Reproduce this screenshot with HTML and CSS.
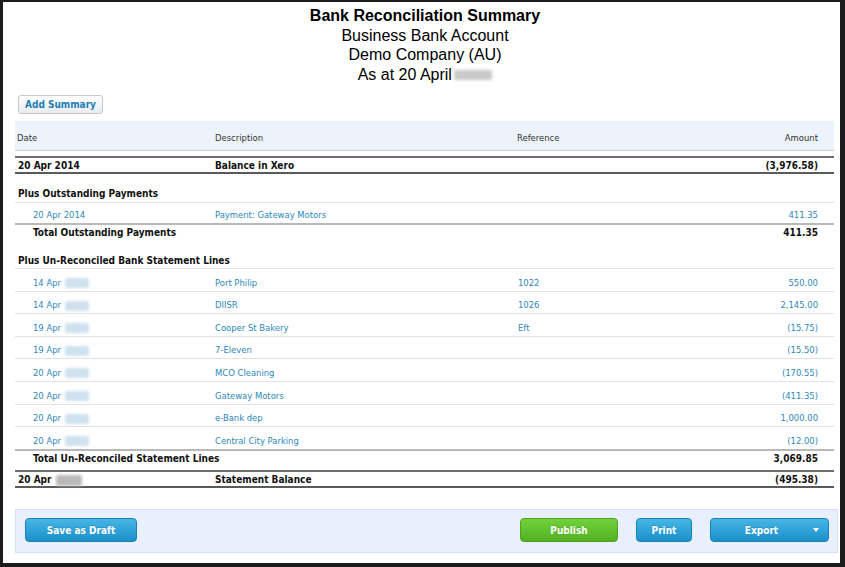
FILE: index.html
```html
<!DOCTYPE html>
<html lang="en">
<head>
<meta charset="utf-8">
<title>Bank Reconciliation Summary</title>
<link rel="stylesheet" href="styles.css">
</head>
<body>
<div class="frame">
  <header class="report-head">
    <h1 class="title">Bank Reconciliation Summary</h1>
    <div class="subtitle">Business Bank Account</div>
    <div class="subtitle">Demo Company (AU)</div>
    <div class="subtitle">As at 20 April <span class="blur blur-title"></span></div>
  </header>

  <div class="toolbar">
    <button class="btn-light">Add Summary</button>
  </div>

  <div class="report">
    <div class="row head-row">
      <span class="c-date">Date</span><span class="c-desc">Description</span><span class="c-ref">Reference</span><span class="c-amt">Amount</span>
    </div>

    <div class="row balance-row">
      <span class="c-date">20 Apr 2014</span><span class="c-desc">Balance in Xero</span><span class="c-ref"></span><span class="c-amt">(3,976.58)</span>
    </div>

    <div class="section section-first">
      <div class="row section-title">Plus Outstanding Payments</div>
      <div class="row item">
        <span class="c-date indent">20 Apr 2014</span><span class="c-desc">Payment: Gateway Motors</span><span class="c-ref"></span><span class="c-amt">411.35</span>
      </div>
      <div class="row total">
        <span class="c-label indent">Total Outstanding Payments</span><span class="c-amt">411.35</span>
      </div>
    </div>

    <div class="section">
      <div class="row section-title">Plus Un-Reconciled Bank Statement Lines</div>
      <div class="row item">
        <span class="c-date indent">14 Apr<i class="blur blur-blue"></i></span><span class="c-desc">Port Philip</span><span class="c-ref">1022</span><span class="c-amt">550.00</span>
      </div>
      <div class="row item">
        <span class="c-date indent">14 Apr<i class="blur blur-blue"></i></span><span class="c-desc">DIISR</span><span class="c-ref">1026</span><span class="c-amt">2,145.00</span>
      </div>
      <div class="row item">
        <span class="c-date indent">19 Apr<i class="blur blur-blue"></i></span><span class="c-desc">Cooper St Bakery</span><span class="c-ref">Eft</span><span class="c-amt">(15.75)</span>
      </div>
      <div class="row item">
        <span class="c-date indent">19 Apr<i class="blur blur-blue"></i></span><span class="c-desc">7-Eleven</span><span class="c-ref"></span><span class="c-amt">(15.50)</span>
      </div>
      <div class="row item">
        <span class="c-date indent">20 Apr<i class="blur blur-blue"></i></span><span class="c-desc">MCO Cleaning</span><span class="c-ref"></span><span class="c-amt">(170.55)</span>
      </div>
      <div class="row item">
        <span class="c-date indent">20 Apr<i class="blur blur-blue"></i></span><span class="c-desc">Gateway Motors</span><span class="c-ref"></span><span class="c-amt">(411.35)</span>
      </div>
      <div class="row item">
        <span class="c-date indent">20 Apr<i class="blur blur-blue"></i></span><span class="c-desc">e-Bank dep</span><span class="c-ref"></span><span class="c-amt">1,000.00</span>
      </div>
      <div class="row item">
        <span class="c-date indent">20 Apr<i class="blur blur-blue"></i></span><span class="c-desc">Central City Parking</span><span class="c-ref"></span><span class="c-amt">(12.00)</span>
      </div>
      <div class="row total">
        <span class="c-label indent">Total Un-Reconciled Statement Lines</span><span class="c-amt">3,069.85</span>
      </div>
    </div>

    <div class="row balance-row statement">
      <span class="c-date">20 Apr<i class="blur blur-grey"></i></span><span class="c-desc">Statement Balance</span><span class="c-ref"></span><span class="c-amt">(495.38)</span>
    </div>
  </div>

  <div class="actions">
    <button class="btn btn-blue btn-draft">Save as Draft</button>
    <div class="actions-right">
      <button class="btn btn-green btn-publish">Publish</button>
      <button class="btn btn-blue btn-print">Print</button>
      <button class="btn btn-blue btn-export"><span class="export-label">Export</span><span class="caret"></span></button>
    </div>
  </div>
</div>
</body>
</html>
```

FILE: styles.css
```css
* { box-sizing: border-box; }

html, body {
  margin: 0;
  padding: 0;
  background: #ffffff;
}

.frame {
  width: 845px;
  height: 567px;
  border-style: solid;
  border-color: #1c1c1c;
  border-width: 2px 5px 4px 3px;
  background: #ffffff;
  overflow: hidden;
  font-family: "DejaVu Sans Condensed", "DejaVu Sans", sans-serif;
  font-size: 9.4px;
  color: #222222;
}

/* ---------- heading ---------- */
.report-head {
  padding: 4px 0 0 7px;
  text-align: center;
  font-family: "Liberation Sans", Arial, sans-serif;
  font-size: 16px;
  line-height: 19.5px;
  color: #000000;
}

.title {
  margin: 0;
  font-size: 16px;
  font-weight: bold;
  line-height: 19.5px;
}

.blur {
  display: inline-block;
  vertical-align: middle;
  border-radius: 2px;
  filter: blur(1.5px);
}

.blur-title {
  width: 38px;
  height: 10px;
  margin-left: -2px;
  background: #c9c9c9;
}

/* ---------- toolbar ---------- */
.toolbar {
  padding: 11px 0 0 15px;
}

.btn-light {
  display: block;
  width: 85px;
  height: 19px;
  padding: 0;
  border: 1px solid #c6c9cc;
  border-radius: 3px;
  background: linear-gradient(#ffffff, #e9ebed);
  font-family: "DejaVu Sans Condensed", "DejaVu Sans", sans-serif;
  font-size: 10px;
  font-weight: bold;
  color: #1f7fb6;
}

/* ---------- report table ---------- */
.report {
  margin: 7px 6px 0 12px;
}

.row {
  display: flex;
  padding: 0 16px 0 3px;
  line-height: 14px;
  white-space: nowrap;
}

.c-date { flex: 0 0 197px; }
.c-desc { flex: 0 0 303px; }
.c-ref { flex: 1 1 auto; }
.c-label { flex: 1 1 auto; }
.c-amt { flex: 0 0 140px; text-align: right; }

.head-row {
  padding-top: 10px;
  padding-bottom: 5px;
  padding-left: 2px;
  background: #edf3fa;
  border-bottom: 1px solid #c9d0d8;
  color: #333333;
}

.head-row .c-desc { margin-left: 1px; flex-basis: 302px; }

.balance-row {
  margin-top: 5px;
  padding-top: 1px;
  line-height: 13px;
  border-top: 2px solid #6e6e6e;
  border-bottom: 2px solid #5a5a5a;
  font-size: 10px;
  font-weight: bold;
  color: #111111;
}

.balance-row.statement {
  margin-top: 5px;
}

.section-title {
  display: block;
  padding-top: 13px;
  padding-bottom: 0.5px;
  border-bottom: 1px solid #e3e3e3;
  font-size: 10px;
  font-weight: bold;
  color: #111111;
}

.item {
  padding-top: 6.5px;
  padding-bottom: 1.1px;
  border-bottom: 1px solid #e3e3e3;
  color: #2d88b9;
}

.section-first .item {
  padding-top: 5.5px;
}

.item:nth-last-child(2) {
  border-bottom: none;
}

.total {
  padding-top: 1px;
  padding-bottom: 0.5px;
  line-height: 13px;
  border-top: 2px solid #b9b9b9;
  font-size: 10px;
  font-weight: bold;
  color: #111111;
}

.section-first .total {
  padding-bottom: 1.5px;
}

.indent { padding-left: 15px; }

.blur-blue {
  width: 24px;
  height: 10px;
  margin-left: 4px;
  background: #cfe1ee;
}

.blur-grey {
  width: 26px;
  height: 11px;
  margin-left: 4px;
  background: #b9b9b9;
}

/* ---------- actions bar ---------- */
.actions {
  display: flex;
  justify-content: space-between;
  align-items: center;
  margin: 21px 2px 0 12px;
  padding: 8px 8px 10px 9px;
  background: #e7f0fc;
  border: 1px solid #d5e2f2;
}

.actions-right {
  display: flex;
  gap: 18px;
}

.btn {
  height: 24px;
  padding: 0;
  border-radius: 4px;
  font-family: "DejaVu Sans Condensed", "DejaVu Sans", sans-serif;
  font-size: 10px;
  font-weight: bold;
  color: #ffffff;
  text-shadow: 0 -1px 0 rgba(0, 0, 0, 0.15);
}

.btn-blue {
  border: 1px solid #1a80b8;
  background: linear-gradient(#45b6e6, #1d8fcb);
}

.btn-green {
  border: 1px solid #4c9f1f;
  background: linear-gradient(#72d23c, #52b122);
}

.btn-draft { width: 112px; }
.btn-publish { width: 98px; }
.btn-print { width: 56px; }

.btn-export {
  width: 119px;
  display: grid;
  grid-template-columns: 1fr 24px;
  align-items: center;
  padding-left: 8px;
}

.export-label { text-align: center; }

.caret {
  justify-self: center;
  width: 0;
  height: 0;
  border-left: 3.5px solid transparent;
  border-right: 3.5px solid transparent;
  border-top: 4px solid #ffffff;
}
```
